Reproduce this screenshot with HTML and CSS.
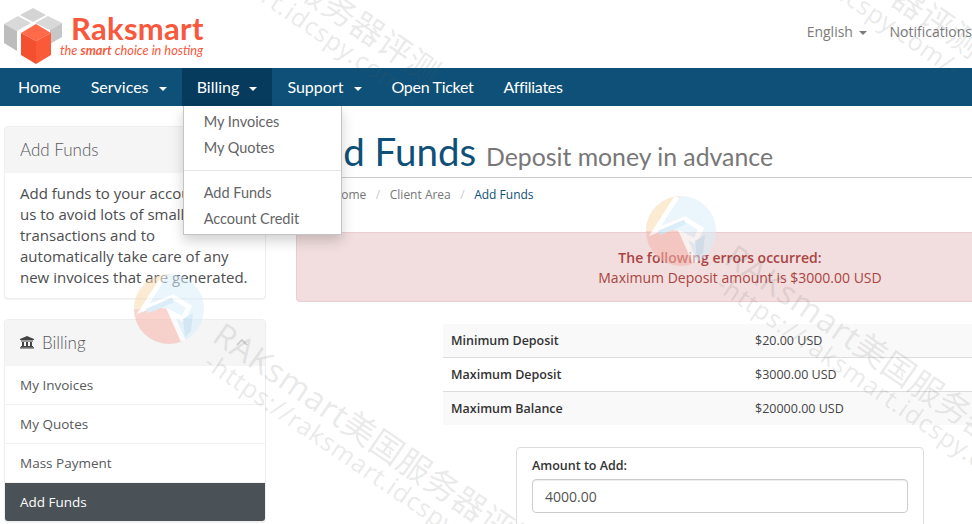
FILE: index.html
```html
<!doctype html>
<html lang="en">

<head>
  <meta charset="UTF-8" />
  <meta name="viewport" content="width=device-width, initial-scale=1.0" />
  <title>Add Funds</title>
  <link rel="stylesheet" href="styles.css">
</head>

<body>
  <div class="page">
    <header class="topbar">
      <a class="logo" href="#">
        <svg class="logo-mark" width="68" height="52" viewBox="0 0 68 52">
          <polygon points="20,8 33,1 46,8 33,15" fill="#d4d4d4" />
          <polygon points="4,17 18,9 31,16 17,24" fill="#d9d9d9" />
          <polygon points="35,16 48,9 62,16 50,23 " fill="#d9d9d9" />
          <polygon points="4,17 17,24 17,44 4,36" fill="#bdbdbd" />
          <polygon points="50,23 62,16 62,30 50,37" fill="#c6c6c6" />
          <polygon points="21,26 36,17 51,26 36,34" fill="#ff6a4a" />
          <polygon points="21,26 36,34 36,57 21,48" fill="#f4502f" />
          <polygon points="36,34 51,26 51,48 36,57" fill="#fb5a39" />
        </svg>
        <span class="logo-text">
          <span class="logo-name">Raksmart</span>
          <span class="logo-tag">the <b>smart</b> choice in hosting</span>
        </span>
      </a>
      <div class="top-links">
        <a href="#">English <i class="caret"></i></a>
        <a href="#">Notifications</a>
      </div>
    </header>

    <nav class="navbar">
      <a href="#">Home</a>
      <a href="#">Services <i class="caret"></i></a>
      <div class="nav-item">
        <a href="#" class="active">Billing <i class="caret"></i></a>
        <div class="dropdown">
          <a href="#">My Invoices</a>
          <a href="#">My Quotes</a>
          <hr />
          <a href="#">Add Funds</a>
          <a href="#">Account Credit</a>
        </div>
      </div>
      <a href="#">Support <i class="caret"></i></a>
      <a href="#" class="nav-tight">Open Ticket</a>
      <a href="#" class="nav-tight">Affiliates</a>
    </nav>

    <div class="content">
      <aside class="sidebar">
        <div class="panel">
          <h3 class="panel-title">Add Funds</h3>
          <p class="panel-body">
            Add funds to your account with
            us to avoid lots of small
            transactions and to
            automatically take care of any
            new invoices that are generated.
          </p>
        </div>

        <div class="panel">
          <h3 class="panel-title">
            <svg class="bank" width="14" height="14" viewBox="0 0 14 14">
              <path d="M7 1 L14 4 V5 H0 V4 Z" fill="#444" />
              <path d="M1 5.5 H13 V6.5 H1 Z M2 7 H4 V11 H2 Z M6 7 H8 V11 H6 Z M10 7 H12 V11 H10 Z M1 11 H13 V12 H1 Z M0 12.3 H14 V13.6 H0 Z" fill="#444" />
            </svg>
            Billing
            <svg class="chevron" width="12" height="8" viewBox="0 0 12 8">
              <path d="M1 7 L6 2 L11 7" fill="none" stroke="#c8c8c8" stroke-width="1.6" />
            </svg>
          </h3>
          <div class="panel-list">
            <a href="#">My Invoices</a>
            <a href="#">My Quotes</a>
            <a href="#">Mass Payment</a>
            <a href="#" class="active">Add Funds</a>
          </div>
        </div>
      </aside>

      <main class="main">
        <h1 class="page-title">Add Funds <small>Deposit money in advance</small></h1>
        <div class="breadcrumb">
          <a href="#">Portal Home</a><span>/</span>
          <a href="#">Client Area</a><span>/</span>
          <a href="#" class="current">Add Funds</a>
        </div>

        <div class="alert">
          <strong>The following errors occurred:</strong>
          <ul>
            <li>Maximum Deposit amount is $3000.00 USD</li>
          </ul>
        </div>

        <table class="limits">
          <tr>
            <th>Minimum Deposit</th>
            <td>$20.00 USD</td>
          </tr>
          <tr>
            <th>Maximum Deposit</th>
            <td>$3000.00 USD</td>
          </tr>
          <tr>
            <th>Maximum Balance</th>
            <td>$20000.00 USD</td>
          </tr>
        </table>

        <form class="add-form">
          <label for="amount">Amount to Add:</label>
          <input id="amount" type="text" value="4000.00" />
        </form>
      </main>
    </div>

    <!-- watermark laid over the whole screenshot -->
    <div class="marks">
      <div class="mark mark-a">
        <span class="mark-big">RAKsmart美国服务器评测</span>
        <span class="mark-url">-https://raksmart.idcspy.com/-</span>
      </div>
      <div class="mark mark-b">
        <span class="mark-big">RAKsmart美国服务器评测</span>
        <span class="mark-url">-https://raksmart.idcspy.com/-</span>
      </div>
      <div class="mark mark-c">
        <span class="mark-big">RAKsmart美国服务器评测</span>
        <span class="mark-url">-https://raksmart.idcspy.com/-</span>
      </div>
      <div class="mark mark-d">
        <span class="mark-big">RAKsmart美国服务器评测</span>
        <span class="mark-url">-https://raksmart.idcspy.com/-</span>
      </div>

      <svg class="disc disc-a" width="72" height="72" viewBox="0 0 72 72">
        <defs>
          <clipPath id="disc-clip">
            <circle cx="36" cy="36" r="35" />
          </clipPath>
          <g id="disc-art" clip-path="url(#disc-clip)">
            <rect width="72" height="72" fill="#d9eefb" />
            <polygon points="0,0 36,0 10,36 0,40" fill="#fbdcb0" />
            <polygon points="0,36 10,36 36,28 24,34 34,36 52,72 0,72" fill="#f7b4aa" />
            <path d="M32 2 L10 36 L40 24 L56 34 L50 46 L38 40 L52 72" fill="none" stroke="#ffffff" stroke-width="5" />
            <path d="M14 38 L40 27" stroke="#bfe0f5" stroke-width="5" />
            <polygon points="50,46 60,40 58,58 52,64" fill="#b9dcf3" />
          </g>
        </defs>
        <use href="#disc-art" />
      </svg>
      <svg class="disc disc-b" width="72" height="72" viewBox="0 0 72 72">
        <use href="#disc-art" />
      </svg>
    </div>
  </div>
</body>

</html>
```

FILE: styles.css
```css
html,
body {
  margin: 0;
  padding: 0;
  height: 100%;
  overflow: hidden;
  background-color: #ffffff;
}

body {
  font-family: "Open Sans", Arial, sans-serif;
  font-size: 14px;
  color: #58595b;
}

a {
  color: inherit;
  text-decoration: none;
}

.page {
  position: relative;
  width: 1149px;
  height: 524px;
  overflow: hidden;
}

.caret {
  display: inline-block;
  width: 0;
  height: 0;
  margin-left: 5px;
  vertical-align: middle;
  border-top: 4px solid currentColor;
  border-left: 4px solid transparent;
  border-right: 4px solid transparent;
}

/* header */
.topbar {
  height: 68px;
  display: flex;
  align-items: center;
  justify-content: space-between;
}

.logo {
  display: flex;
  align-items: flex-start;
  height: 68px;
}

.logo-mark {
  margin-top: 7px;
  overflow: visible;
}

.logo-text {
  display: flex;
  flex-direction: column;
  margin-left: 3px;
}

.logo-name {
  margin-top: 12px;
  font-family: Lato, sans-serif;
  font-weight: 700;
  font-size: 31px;
  line-height: 32px;
  color: #f9583c;
  letter-spacing: 0.3px;
}

.logo-tag {
  font-family: Lato, sans-serif;
  font-style: italic;
  font-size: 12.8px;
  line-height: 13px;
  color: #f9583c;
  margin-left: -11px;
}

.top-links {
  display: flex;
  gap: 23px;
  padding-right: 177px;
  color: #7b7b7b;
  font-size: 14px;
  margin-top: -6px;
}

.top-links .caret {
  margin-left: 2px;
}

/* nav */
.navbar {
  height: 38px;
  display: flex;
  background-color: #0e5077;
  font-family: Lato, sans-serif;
  font-size: 16px;
  padding-left: 3px;
}

.navbar a {
  color: #ffffff;
}

.navbar > a,
.nav-item > a {
  display: block;
  padding: 0 15px;
  line-height: 37px;
}

.navbar .caret {
  margin-left: 6px;
}

.navbar .active {
  background-color: #063b5e;
  height: 38px;
}

.navbar .nav-tight {
  letter-spacing: -0.3px;
}

.nav-item {
  position: relative;
}

.dropdown {
  position: absolute;
  top: 100%;
  left: 1px;
  z-index: 5;
  width: 159px;
  height: 129px;
  padding-top: 3px;
  box-sizing: border-box;
  background-color: #ffffff;
  border: 1px solid #c4c4c4;
  border-top: 0;
  box-shadow: 0 6px 12px rgba(0, 0, 0, 0.18);
}

.navbar .dropdown a {
  display: block;
  padding-left: 20px;
  line-height: 26px;
  font-size: 14.5px;
  color: #636466;
}

.dropdown hr {
  border: 0;
  border-top: 1px solid #e5e5e5;
  margin: 9px 0;
}

/* columns */
.content {
  display: flex;
  gap: 30px;
  padding: 20px 0 0 4px;
}

.sidebar {
  width: 262px;
  flex-shrink: 0;
}

.panel {
  margin-bottom: 20px;
  background-color: #ffffff;
  border: 1px solid #eeeeee;
  border-radius: 4px;
  overflow: hidden;
  box-shadow: 0 1px 1px rgba(0, 0, 0, 0.05);
}

.panel-title {
  margin: 0;
  height: 46px;
  box-sizing: border-box;
  padding: 0 15px 2px;
  display: flex;
  align-items: center;
  gap: 8px;
  background-color: #f5f5f5;
  font-family: Lato, sans-serif;
  font-weight: 300;
  font-size: 17px;
  color: #58595b;
}

.chevron {
  margin-left: auto;
  margin-right: 2px;
}

.panel-body {
  margin: 0;
  padding: 10px 15px 10px;
  font-size: 15px;
  line-height: 21px;
  color: #4c4d4f;
}

.panel-list a {
  display: block;
  height: 38px;
  line-height: 38px;
  padding-left: 15px;
  border-bottom: 1px solid #f2f2f2;
  font-size: 13.5px;
  color: #58595b;
}

.panel-list .active {
  background-color: #4a5157;
  color: #ffffff;
  border-bottom: 0;
}

/* main column */
.main {
  width: 848px;
  flex-shrink: 0;
}

.page-title {
  margin: 0;
  height: 51px;
  border-bottom: 1px solid #cccccc;
  font-family: Lato, sans-serif;
  font-weight: 400;
  font-size: 38.5px;
  line-height: 50px;
  color: #0e5077;
  white-space: nowrap;
}

.page-title small {
  font-size: 24.8px;
  color: #777777;
}

.breadcrumb {
  display: flex;
  gap: 9.5px;
  height: 33px;
  align-items: center;
  font-size: 12px;
  color: #777777;
}

.breadcrumb span {
  color: #cccccc;
}

.breadcrumb .current {
  color: #0e5077;
}

.alert {
  margin-top: 21px;
  height: 70px;
  box-sizing: border-box;
  padding: 15px;
  background-color: #f2dede;
  border: 1px solid #ebccd1;
  border-radius: 4px;
  color: #a94442;
  text-align: center;
  line-height: 20px;
}

.alert strong {
  font-weight: 600;
}

.alert ul {
  margin: 0;
  padding-left: 40px;
  list-style: none;
}

.limits {
  width: 554px;
  margin: 22px auto 0;
  border-collapse: collapse;
  font-size: 12.5px;
  color: #333333;
}

.limits th,
.limits td {
  height: 33px;
  padding: 0 8px;
  text-align: left;
}

.limits th {
  width: 288px;
  font-weight: 600;
}

.limits td {
  color: #444444;
}

.limits tr {
  border-top: 1px solid #dddddd;
}

.limits tr:first-child {
  border-top: 0;
}

.limits tr:nth-child(odd) {
  background-color: #f9f9f9;
}

.add-form {
  width: 408px;
  box-sizing: border-box;
  margin: 22px auto 0;
  padding: 9px 15px 40px;
  border: 1px solid #dddddd;
  border-radius: 4px;
}

.add-form label {
  display: block;
  font-size: 12.5px;
  font-weight: 600;
  color: #333333;
  margin-bottom: 5px;
  line-height: 17px;
}

.add-form input {
  display: block;
  width: 100%;
  height: 34px;
  box-sizing: border-box;
  padding: 6px 12px;
  border: 1px solid #cccccc;
  border-radius: 4px;
  font-family: "Open Sans", Arial, sans-serif;
  font-size: 14px;
  color: #555555;
  box-shadow: inset 0 1px 1px rgba(0, 0, 0, 0.075);
}

/* watermark */
.marks {
  position: absolute;
  inset: 0;
  z-index: 10;
  pointer-events: none;
}

.mark {
  position: absolute;
  display: flex;
  flex-direction: column;
  width: 560px;
  transform: rotate(34.5deg);
  transform-origin: 0 0;
  color: rgba(90, 90, 90, 0.13);
  white-space: nowrap;
  font-family: "Noto Sans", "Noto Sans CJK SC", sans-serif;
}

.mark-big {
  font-size: 33px;
  line-height: 38px;
  letter-spacing: 0.4px;
}

.mark-url {
  font-size: 25px;
  line-height: 28px;
  letter-spacing: 0.8px;
  margin: -5px 0 0 8px;
}

.mark-a {
  left: 228px;
  top: 315px;
}

.mark-b {
  left: 740px;
  top: 237px;
}

.mark-c {
  left: 126px;
  top: -160px;
}

.mark-d {
  left: 668px;
  top: -187px;
}

.disc {
  position: absolute;
  opacity: 0.55;
}

.disc-a {
  left: 133px;
  top: 273px;
}

.disc-b {
  left: 645px;
  top: 195px;
}
```
